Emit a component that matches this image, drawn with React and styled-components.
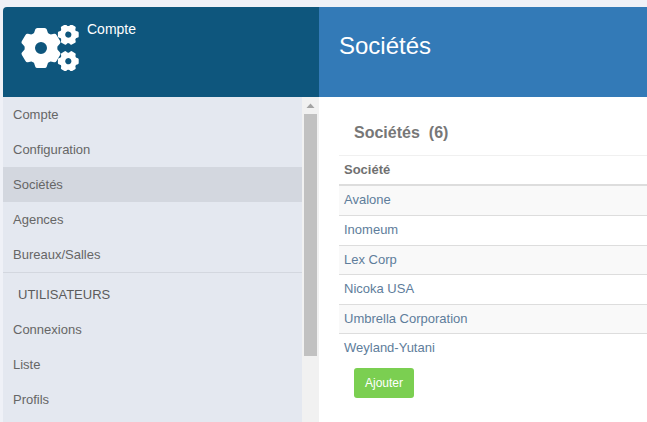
import styled, { createGlobalStyle } from "styled-components";

const GlobalStyle = createGlobalStyle`
  * {
    box-sizing: border-box;
  }
  body {
    margin: 0;
    background: #eff1f7;
    color: #666;
    font-family: "Liberation Sans", Arial, sans-serif;
    font-size: 13px;
    line-height: 18px;
  }
`;

const Page = styled.div`
  display: flex;
  min-height: 100vh;
  padding: 7px 0 0 3px;
`;

const Sidebar = styled.aside`
  display: flex;
  flex-direction: column;
  flex: 0 0 316px;
`;
const SidebarHeader = styled.header`
  display: flex;
  gap: 8px;
  height: 90px;
  padding: 13px 18px;
  background: #0e567d;
  border-top-left-radius: 4px;
  color: #fff;
  font-size: 14px;
`;
const CogsSvg = styled.svg`
  width: 58px;
  height: 46px;
  margin-top: 5px;
  fill: #fff;
`;
const SidebarBody = styled.div`
  display: flex;
  flex: 1;
`;
const Nav = styled.nav`
  flex: 1;
  background: #e4e8f0;
`;
const NavLink = styled.a`
  display: block;
  padding: 0 10px;
  line-height: 35px;
  color: #666;
  text-decoration: none;
  background: ${({ $active }) => ($active ? "#d3d7df" : "transparent")};
`;
const NavTitle = styled.h2`
  margin: 0;
  padding: 4px 15px 0;
  border-top: 1px solid #d3d7df;
  font-size: 13px;
  font-weight: 400;
  line-height: 35px;
  color: #5c5c5c;
  text-transform: uppercase;
`;

const ScrollTrack = styled.div`
  display: flex;
  flex-direction: column;
  align-items: center;
  width: 17px;
  background: #f1f1f1;
`;
const ScrollArrow = styled.svg`
  width: 17px;
  height: 17px;
  fill: #a3a3a3;
`;
const ScrollThumb = styled.div`
  width: 13px;
  height: 242px;
  background: #c1c1c1;
`;

const Main = styled.main`
  flex: 1;
  min-width: 0;
  background: #fff;
`;
const MainHeader = styled.header`
  height: 90px;
  padding: 24px 20px;
  background: #337ab7;
`;
const Title = styled.h1`
  margin: 0;
  color: #fff;
  font-size: 24px;
  font-weight: 400;
  line-height: 30px;
`;
const Content = styled.section`
  padding: 20px 0 20px 20px;
`;
const ListTitle = styled.h2`
  display: flex;
  gap: 9px;
  margin: 0;
  padding: 0 15px 6px;
  color: #777;
  font-size: 16px;
  font-weight: 700;
  line-height: 32px;
`;

const Table = styled.table`
  width: 100%;
  border-collapse: separate;
  border-spacing: 0;
`;
const HeadCell = styled.th`
  height: 31px;
  padding: 0 5px;
  border-top: 1px solid #f0f0f0;
  border-bottom: 2px solid #ddd;
  color: #707070;
  text-align: left;
`;
const Cell = styled.td`
  padding: 5px 5px 0;
  border-top: 1px solid #ddd;
  vertical-align: top;
`;
const Row = styled.tr`
  height: 30px;
  &:nth-child(odd) {
    height: 29px;
    background: #f9f9f9;
  }
  &:first-child ${Cell} {
    border-top: 0;
  }
`;
const CompanyLink = styled.a`
  color: #5e7d9b;
  text-decoration: none;
`;
const AddButton = styled.button`
  display: block;
  height: 30px;
  margin: 5px 15px 0;
  padding: 0 11px;
  border: 0;
  border-radius: 3px;
  background: #7bcf51;
  color: #fff;
  font-family: inherit;
  font-size: 12px;
`;

const accountLinks = [
  "Compte",
  "Configuration",
  "Sociétés",
  "Agences",
  "Bureaux/Salles",
];
const userLinks = ["Connexions", "Liste", "Profils"];
const companies = [
  "Avalone",
  "Inomeum",
  "Lex Corp",
  "Nicoka USA",
  "Umbrella Corporation",
  "Weyland-Yutani",
];

// Six-toothed gear, 40 units across, centred on x / y
const Gear = ({ x, y, scale = 1, turn = 0 }) => (
  <g transform={`translate(${x} ${y}) scale(${scale}) rotate(${turn})`}>
    <circle r="11.2" fill="none" stroke="#fff" strokeWidth="10.4" />
    {[0, 60, 120, 180, 240, 300].map((angle) => (
      <path
        key={angle}
        d="M-7.6 -13 L-5.8 -18.4 Q-5.4 -20 -3.6 -20 H3.6 Q5.4 -20 5.8 -18.4 L7.6 -13 Z"
        transform={`rotate(${angle})`}
      />
    ))}
  </g>
);

const Cogs = () => (
  <CogsSvg viewBox="0 0 58 46" aria-hidden="true">
    <Gear x={20} y={23} />
    <Gear x={47.3} y={9.6} scale={0.52} turn={30} />
    <Gear x={47.3} y={36.2} scale={0.52} turn={30} />
  </CogsSvg>
);

const App = () => {
  return (
    <>
      <GlobalStyle />
      <Page>
        <Sidebar>
          <SidebarHeader>
            <Cogs />
            <span>Compte</span>
          </SidebarHeader>
          <SidebarBody>
            <Nav>
              {accountLinks.map((label) => (
                <NavLink href="#" key={label} $active={label === "Sociétés"}>
                  {label}
                </NavLink>
              ))}
              <NavTitle>Utilisateurs</NavTitle>
              {userLinks.map((label) => (
                <NavLink href="#" key={label}>
                  {label}
                </NavLink>
              ))}
            </Nav>
            <ScrollTrack aria-hidden="true">
              <ScrollArrow viewBox="0 0 17 17">
                <path d="M4.5 11 L8.5 6.4 L12.5 11 Z" />
              </ScrollArrow>
              <ScrollThumb />
            </ScrollTrack>
          </SidebarBody>
        </Sidebar>
        <Main>
          <MainHeader>
            <Title>Sociétés</Title>
          </MainHeader>
          <Content>
            <ListTitle>
              <span>Sociétés</span>
              <span>({companies.length})</span>
            </ListTitle>
            <Table>
              <thead>
                <tr>
                  <HeadCell>Société</HeadCell>
                </tr>
              </thead>
              <tbody>
                {companies.map((name) => (
                  <Row key={name}>
                    <Cell>
                      <CompanyLink href="#">{name}</CompanyLink>
                    </Cell>
                  </Row>
                ))}
              </tbody>
            </Table>
            <AddButton type="button">Ajouter</AddButton>
          </Content>
        </Main>
      </Page>
    </>
  );
};

export default App;
